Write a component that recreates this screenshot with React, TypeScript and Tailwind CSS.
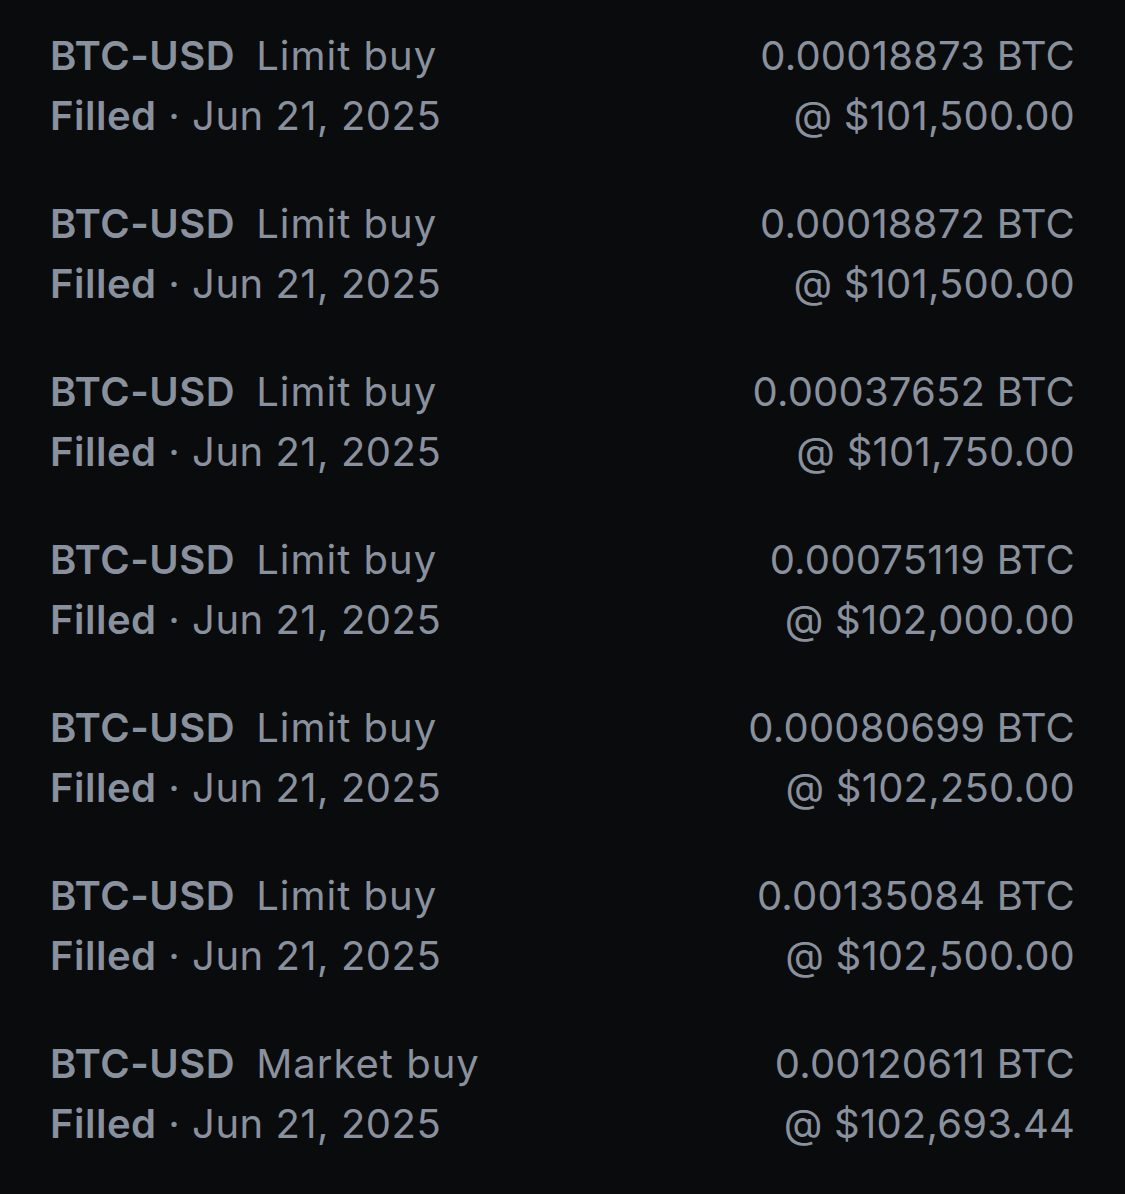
const orders = [
  { type: 'Limit buy', amount: '0.00018873 BTC', price: '@ $101,500.00' },
  { type: 'Limit buy', amount: '0.00018872 BTC', price: '@ $101,500.00' },
  { type: 'Limit buy', amount: '0.00037652 BTC', price: '@ $101,750.00' },
  { type: 'Limit buy', amount: '0.00075119 BTC', price: '@ $102,000.00' },
  { type: 'Limit buy', amount: '0.00080699 BTC', price: '@ $102,250.00' },
  { type: 'Limit buy', amount: '0.00135084 BTC', price: '@ $102,500.00' },
  { type: 'Market buy', amount: '0.00120611 BTC', price: '@ $102,693.44' },
];

export default function App() {
  return (
    <div className="min-h-[1194px] w-full bg-[#0a0b0d] pl-[50px] pr-[50px] pt-[26px] text-[#8a919e] font-['Inter',sans-serif] text-[40px] leading-[60px] tracking-[0.5px]">
      {orders.map((o, i) => (
        <div key={i} className="flex h-[168px] justify-between">
          <div>
            <div className="flex">
              <span className="font-semibold">BTC-USD</span>
              <span className="ml-[21px] tracking-[1px]">{o.type}</span>
            </div>
            <div>
              <span className="font-semibold">Filled</span>
              <span> · Jun 21, 2025</span>
            </div>
          </div>
          <div className="text-right tracking-[0.2px]">
            <div>{o.amount}</div>
            <div>{o.price}</div>
          </div>
        </div>
      ))}
    </div>
  );
}
